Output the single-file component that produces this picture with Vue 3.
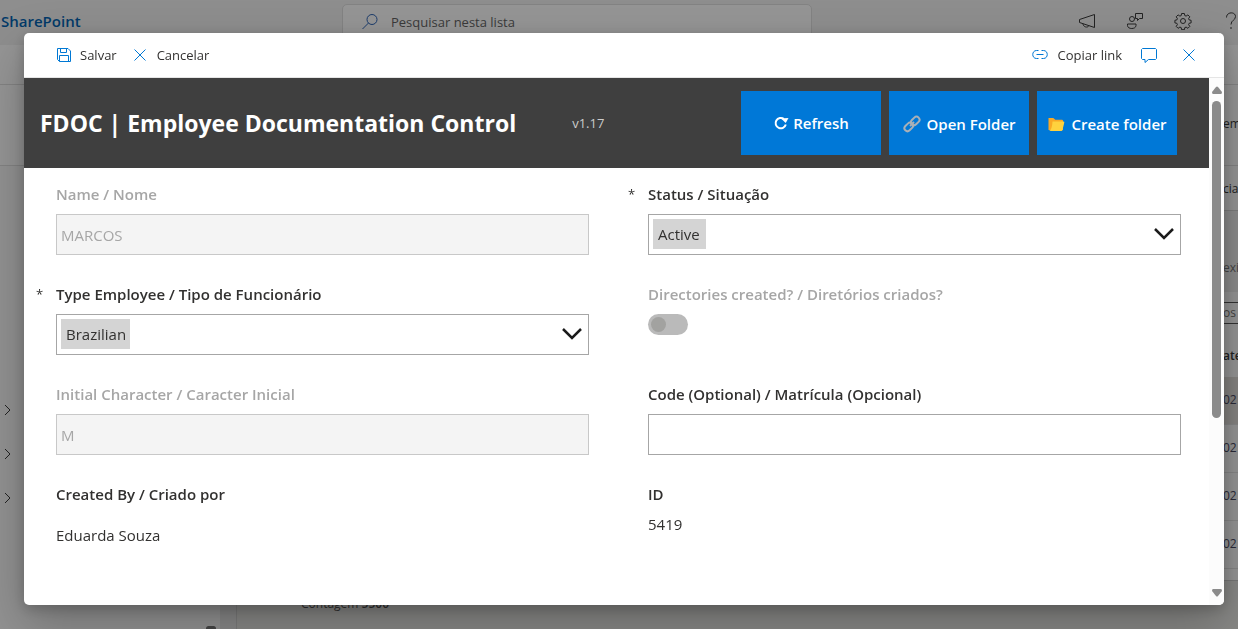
<script setup>
import { ref } from 'vue'

const name = ref('MARCOS')
const status = ref('Active')
const employeeType = ref('Brazilian')
const directories = ref(false)
const initial = ref('M')
const code = ref('')
const rows = ['02', '02', '02', '02']
</script>

<template>
  <div class="page">
    <header class="topbar">
      <a class="brand" href="#">SharePoint</a>
      <div class="search">
        <svg width="18" height="18" viewBox="0 0 18 18" class="search-icon"><circle cx="11" cy="6.500" r="5" /><path d="M7.500 10 1.500 16" /></svg>
        <input type="text" aria-label="Pesquisar" placeholder="Pesquisar nesta lista" />
      </div>
      <div class="top-icons">
        <button aria-label="Novidades">
          <svg width="18" height="18" viewBox="0 0 18 18"><path d="M16.500 2.500v13L1.500 10.500V7.500zM5 11.800c0 3 4.500 4.500 5.800 2" /></svg>
        </button>
        <button aria-label="Comentários">
          <svg width="18" height="18" viewBox="0 0 18 18"><circle cx="6" cy="7" r="2.500" /><path d="M1.500 12h8.500v1.500c0 4-8.500 4-8.500 0zM9.500 1.500h7v5h-3l-2 2v-2h-2z" /></svg>
        </button>
        <button aria-label="Configurações">
          <svg width="18" height="18" viewBox="0 0 18 18"><circle cx="9" cy="9" r="2.500" /><path d="M7.600 1.500h2.800l.4 2.100 1.300.5 1.800-1.200 1.900 1.900-1.200 1.800.5 1.300 2 .4v2.600l-2 .4-.5 1.300 1.200 1.800-1.900 1.900-1.800-1.200-1.300.5-.4 2.100H7.600l-.4-2.100-1.300-.5-1.800 1.200-1.900-1.900 1.200-1.800-.5-1.300-2-.4V8.300l2-.4.5-1.300-1.200-1.800 1.900-1.900 1.800 1.200 1.300-.5z" /></svg>
        </button>
        <button aria-label="Ajuda">
          <svg width="18" height="18" viewBox="0 0 18 18"><path d="M4.500 5.500c0-6 9-6 9-1 0 4-4.500 3.500-4.500 8M9 15v2" /></svg>
        </button>
      </div>
    </header>
    <div class="commands"></div>
    <div class="site-title"><span>em</span></div>
    <div class="site">
      <nav class="sidebar">
        <button v-for="n in 3" :key="n" :aria-label="'Expandir ' + n">
          <svg width="8" height="12" viewBox="0 0 8 12"><path d="m1 1 5 5-5 5" /></svg>
        </button>
        <span class="side-thumb"></span>
      </nav>
      <div class="gutter"></div>
      <main class="list">
        <div class="list-bar"><span>cia</span></div>
        <div class="list-hero"><span>exi</span></div>
        <div class="list-filter"><span>os</span></div>
        <div class="list-head"><span>ate</span></div>
        <div v-for="(row, i) in rows" :key="i" class="list-row"><span>{{ row }}</span></div>
        <div class="list-foot"><p>Contagem <b>5500</b></p></div>
      </main>
    </div>
  </div>

  <section class="dialog" role="dialog" aria-label="FDOC">
    <div class="toolbar">
      <button>
        <svg width="16" height="16" viewBox="0 0 16 16"><path d="M1.500 1.500h10.500l2.500 2.500v10.500h-11l-2-2zM4.500 1.500v4h6v-4M3.500 14.500v-6h9v6" /></svg>
        Salvar
      </button>
      <button>
        <svg width="14" height="14" viewBox="0 0 14 14"><path d="m1.500 1.500 11 11m0-11-11 11" /></svg>
        Cancelar
      </button>
      <span class="spacer"></span>
      <button class="copy">
        <svg width="18" height="16" viewBox="0 0 18 16"><path d="M7.500 3.500h-2c-5 0-5 8 0 8h2M10.500 3.500h2c5 0 5 8 0 8h-2M5.500 7.500h7" /></svg>
        Copiar link
      </button>
      <button class="comment" aria-label="Comentários">
        <svg width="18" height="18" viewBox="0 0 18 18"><path d="M2.500 2.500h13l1 1v9l-1 1H8.500l-3.500 3v-3h-2.500l-1-1v-9z" /></svg>
      </button>
      <button aria-label="Fechar">
        <svg width="14" height="14" viewBox="0 0 14 14"><path d="m1.500 1.500 11 11m0-11-11 11" /></svg>
      </button>
    </div>
    <div class="body">
      <div class="content">
        <header class="banner">
          <h1>FDOC | Employee Documentation Control</h1>
          <span class="version">v1.17</span>
          <div class="actions">
            <button>
              <svg width="16" height="16" viewBox="0 0 16 16"><path class="refresh" d="M11 4A5.200 5.200 0 1 0 12.800 9.500" /><path class="head" d="M8 3.500 15.500 3l-2.800 5z" /></svg>
              Refresh
            </button>
            <button class="wide">
              <svg width="18" height="18" viewBox="0 0 18 18" class="chain"><rect x="7.500" y="3" width="9.500" height="6" rx="3" transform="rotate(-45 12.200 6)" /><rect x="1" y="9" width="9.500" height="6" rx="3" transform="rotate(-45 5.700 12)" /><path d="m7 11 4-4" /></svg>
              Open Folder
            </button>
            <button class="wide">
              <svg width="18" height="18" viewBox="0 0 18 18"><path fill="#f9a825" d="M1.500 3h4.800l2 1.800H15a1 1 0 0 1 1 1V15H1.500z" /><path fill="#ffd23e" d="M5.500 6.500h11q1 0 .8 1L15.500 15q-.2 1-1.200 1H2q3-.5 3.500-9.500z" /></svg>
              Create folder
            </button>
          </div>
        </header>
        <form class="form" @submit.prevent>
          <div class="field">
            <label class="off" for="name">Name / Nome</label>
            <input id="name" v-model="name" class="box" type="text" disabled />
          </div>
          <div class="field required">
            <label for="status">Status / Situação</label>
            <div class="pick">
              <select id="status" v-model="status" class="box chip-short"><option>Active</option><option>Inactive</option></select>
              <svg width="20" height="14" viewBox="0 0 20 14"><path d="m1 2 9 9 9-9" /></svg>
            </div>
          </div>
          <div class="field required">
            <label for="type">Type Employee / Tipo de Funcionário</label>
            <div class="pick">
              <select id="type" v-model="employeeType" class="box chip-long"><option>Brazilian</option><option>Foreigner</option></select>
              <svg width="20" height="14" viewBox="0 0 20 14"><path d="m1 2 9 9 9-9" /></svg>
            </div>
          </div>
          <div class="field">
            <label class="off" for="dirs">Directories created? / Diretórios criados?</label>
            <input id="dirs" v-model="directories" class="toggle" type="checkbox" disabled />
          </div>
          <div class="field">
            <label class="off" for="initial">Initial Character / Caracter Inicial</label>
            <input id="initial" v-model="initial" class="box" type="text" disabled />
          </div>
          <div class="field">
            <label for="code">Code (Optional) / Matrícula (Opcional)</label>
            <input id="code" v-model="code" class="box" type="text" />
          </div>
          <div class="field">
            <h2>Created By / Criado por</h2>
            <p class="person">Eduarda Souza</p>
          </div>
          <div class="field">
            <h2>ID</h2>
            <p>5419</p>
          </div>
        </form>
      </div>
      <div class="scrollbar">
        <svg width="10" height="8" viewBox="0 0 10 8"><path d="M4 1Q5 0 6 1l4 5q0 2-1 2H1q-1 0-1-2z" /></svg>
        <div class="track"><div class="thumb"></div></div>
        <svg width="10" height="8" viewBox="0 0 10 8"><path d="M4 7Q5 8 6 7l4-5q0-2-1-2H1Q0 0 0 2z" /></svg>
      </div>
    </div>
  </section>
</template>

<style>
body { overflow: hidden; }
</style>

<style scoped>
* { box-sizing: border-box; }
.page, .dialog { font-family: "Segoe UI", "Open Sans", "Noto Sans", sans-serif; }
button, input, select { font: inherit; color: inherit; }
button { display: flex; align-items: center; border: 0; padding: 0; background: none; white-space: nowrap; }
svg { flex: none; fill: none; stroke: currentColor; }
h1, h2, p { margin: 0; }

.page { display: flex; flex-direction: column; height: 100vh; overflow: hidden; background: #959595; color: #222; font-size: 13px; }
.topbar { display: flex; align-items: center; flex: none; height: 45px; background: #8e8e8e; }
.brand { width: 342px; padding: 0 0 4px 1px; color: #023a69; font-size: 15px; font-weight: 600; text-decoration: none; }
.search { display: flex; align-items: center; align-self: flex-end; width: 470px; height: 41px; padding: 0 18px 6px; border: 1px solid #838383; border-radius: 5px; background: #959595; }
.search-icon { color: #1c3c6c; }
.search input { flex: 1; margin-left: 10px; padding: 0 2px; border: 0; background: none; outline: 0; }
.search input::placeholder { color: #3a3a3a; opacity: 1; }
.top-icons { display: flex; gap: 30px; margin: 0 -2px 4px auto; color: #222; }
.commands { flex: none; height: 40px; border-bottom: 1px solid #838383; }
.site-title { display: flex; align-items: center; justify-content: flex-end; flex: none; height: 81px; padding-bottom: 4px; border-bottom: 1px solid #838383; }
.site { display: flex; flex: 1; min-height: 0; }
.sidebar { display: flex; flex-direction: column; gap: 32px; width: 220px; padding: 238px 4px 0; background: #929292; }
.side-thumb { width: 10px; height: 5px; margin: auto 0 -2px auto; border-radius: 3px; background: #444; }
.gutter { width: 17px; border-right: 1px solid #7b7b7b; background: #888; }
.list { display: flex; flex-direction: column; flex: 1; }
.list > div { display: flex; align-items: center; justify-content: flex-end; flex: none; border-bottom: 1px solid #868686; }
.list span, .site-title span { width: 15px; font-size: 12px; white-space: nowrap; }
.list .list-bar { height: 45px; border-color: #7c7c7c; }
.list .list-hero { height: 81px; padding-top: 32px; border: 0; background: #8c8c8c; color: #444; }
.list .list-filter { height: 42px; border: 0; }
.list-filter span { border: solid #333; border-width: 1px 0; color: #444; line-height: 20px; }
.list .list-head { height: 43px; border: 0; font-weight: 600; }
.list .list-row { height: 48px; padding-bottom: 2px; }
.list-row:nth-child(5) { background: #858381; }
.list-row span { color: #2a2a38; }
.list .list-foot { height: 56px; margin-top: 11px; padding-left: 64px; justify-content: flex-start; border-top: 1px solid #777; background: #888886; color: #303030; font-size: 12px; }
.list-foot p { padding-bottom: 10px; }
.list-foot b { font-weight: 600; }

.dialog { position: fixed; inset: 33px 14px 24px 24px; display: flex; flex-direction: column; overflow: hidden; border-radius: 5px; background: #fff; box-shadow: 0 20px 50px rgba(0, 0, 0, .25), 0 4px 14px rgba(0, 0, 0, .2); color: #323130; font-size: 15px; }
.toolbar { display: flex; align-items: center; gap: 16px; flex: none; height: 45px; padding: 0 28px 0 32px; border-bottom: 1px solid #e5e5e5; font-size: 13px; }
.toolbar button { gap: 8px; }
.toolbar button:nth-child(2) { gap: 10px; }
.toolbar svg { color: #0078d4; }
.spacer { flex: 1; }
.comment { margin: 0 8px 0 2px; }
.body { display: flex; flex: 1; min-height: 0; }
.content { flex: 1; overflow: hidden; }
.banner { display: flex; align-items: center; height: 90px; padding: 0 32px 0 16px; background: #3f3f3f; color: #fff; }
.banner h1 { font-size: 23px; font-weight: 700; white-space: nowrap; }
.version { margin-left: 56px; color: #ccc; font-size: 13px; }
.actions { display: flex; gap: 8px; margin-left: auto; }
.actions button { justify-content: center; gap: 4px; width: 140px; height: 64px; background: #0078d7; font-size: 15px; font-weight: 600; }
.actions .wide { gap: 6px; padding-top: 2px; }
.actions svg { stroke: none; }
.refresh { fill: none; stroke: #fff; stroke-width: 2; }
.head { fill: #fff; }
.actions .chain { stroke: #a9b0b7; stroke-width: 2; }

.form { display: grid; grid-template-columns: 1fr 1fr; grid-auto-rows: 100px; column-gap: 59px; padding: 16px 28px 0 32px; }
.field { position: relative; }
.field label, .field h2 { display: block; margin-bottom: 10px; font-size: 15px; font-weight: 600; line-height: 20px; }
.field .off { color: #a6a6a6; }
.required::before { content: "*"; position: absolute; left: -20px; font-size: 13px; line-height: 20px; }
.box { display: block; width: 100%; height: 41px; padding: 0 4px; border: 1px solid #a6a6a6; border-radius: 0; background: #fff; }
.box:disabled { border-color: #c8c8c8; background: #f4f4f4; color: #a6a6a6; }
.pick { position: relative; }
.pick select { appearance: none; padding: 0 9px 2px; background-image: linear-gradient(#d4d4d4, #d4d4d4); background-repeat: no-repeat; background-position: 4px 4px; }
.pick .chip-short { background-size: 53px 30px; }
.pick .chip-long { background-size: 69px 30px; }
.pick svg { position: absolute; top: 13px; right: 7px; color: #1b1b1b; stroke-width: 2.500; pointer-events: none; }
.toggle { appearance: none; display: block; width: 40px; height: 21px; margin: 0; padding: 3px; border-radius: 11px; background: #bababa; }
.toggle::before { content: ""; display: block; width: 15px; height: 15px; border-radius: 50%; background: #a2a2a0; }
.field p { line-height: 20px; }
.field .person { line-height: 42px; }
.scrollbar { display: flex; flex-direction: column; align-items: center; gap: 7px; width: 15px; padding: 8px 0; background: #fcfcfc; color: #8b8b8b; }
.scrollbar svg { fill: currentColor; stroke: none; }
.track { flex: 1; }
.thumb { width: 9px; height: 66%; border-radius: 5px; background: #8b8b8b; }
</style>
